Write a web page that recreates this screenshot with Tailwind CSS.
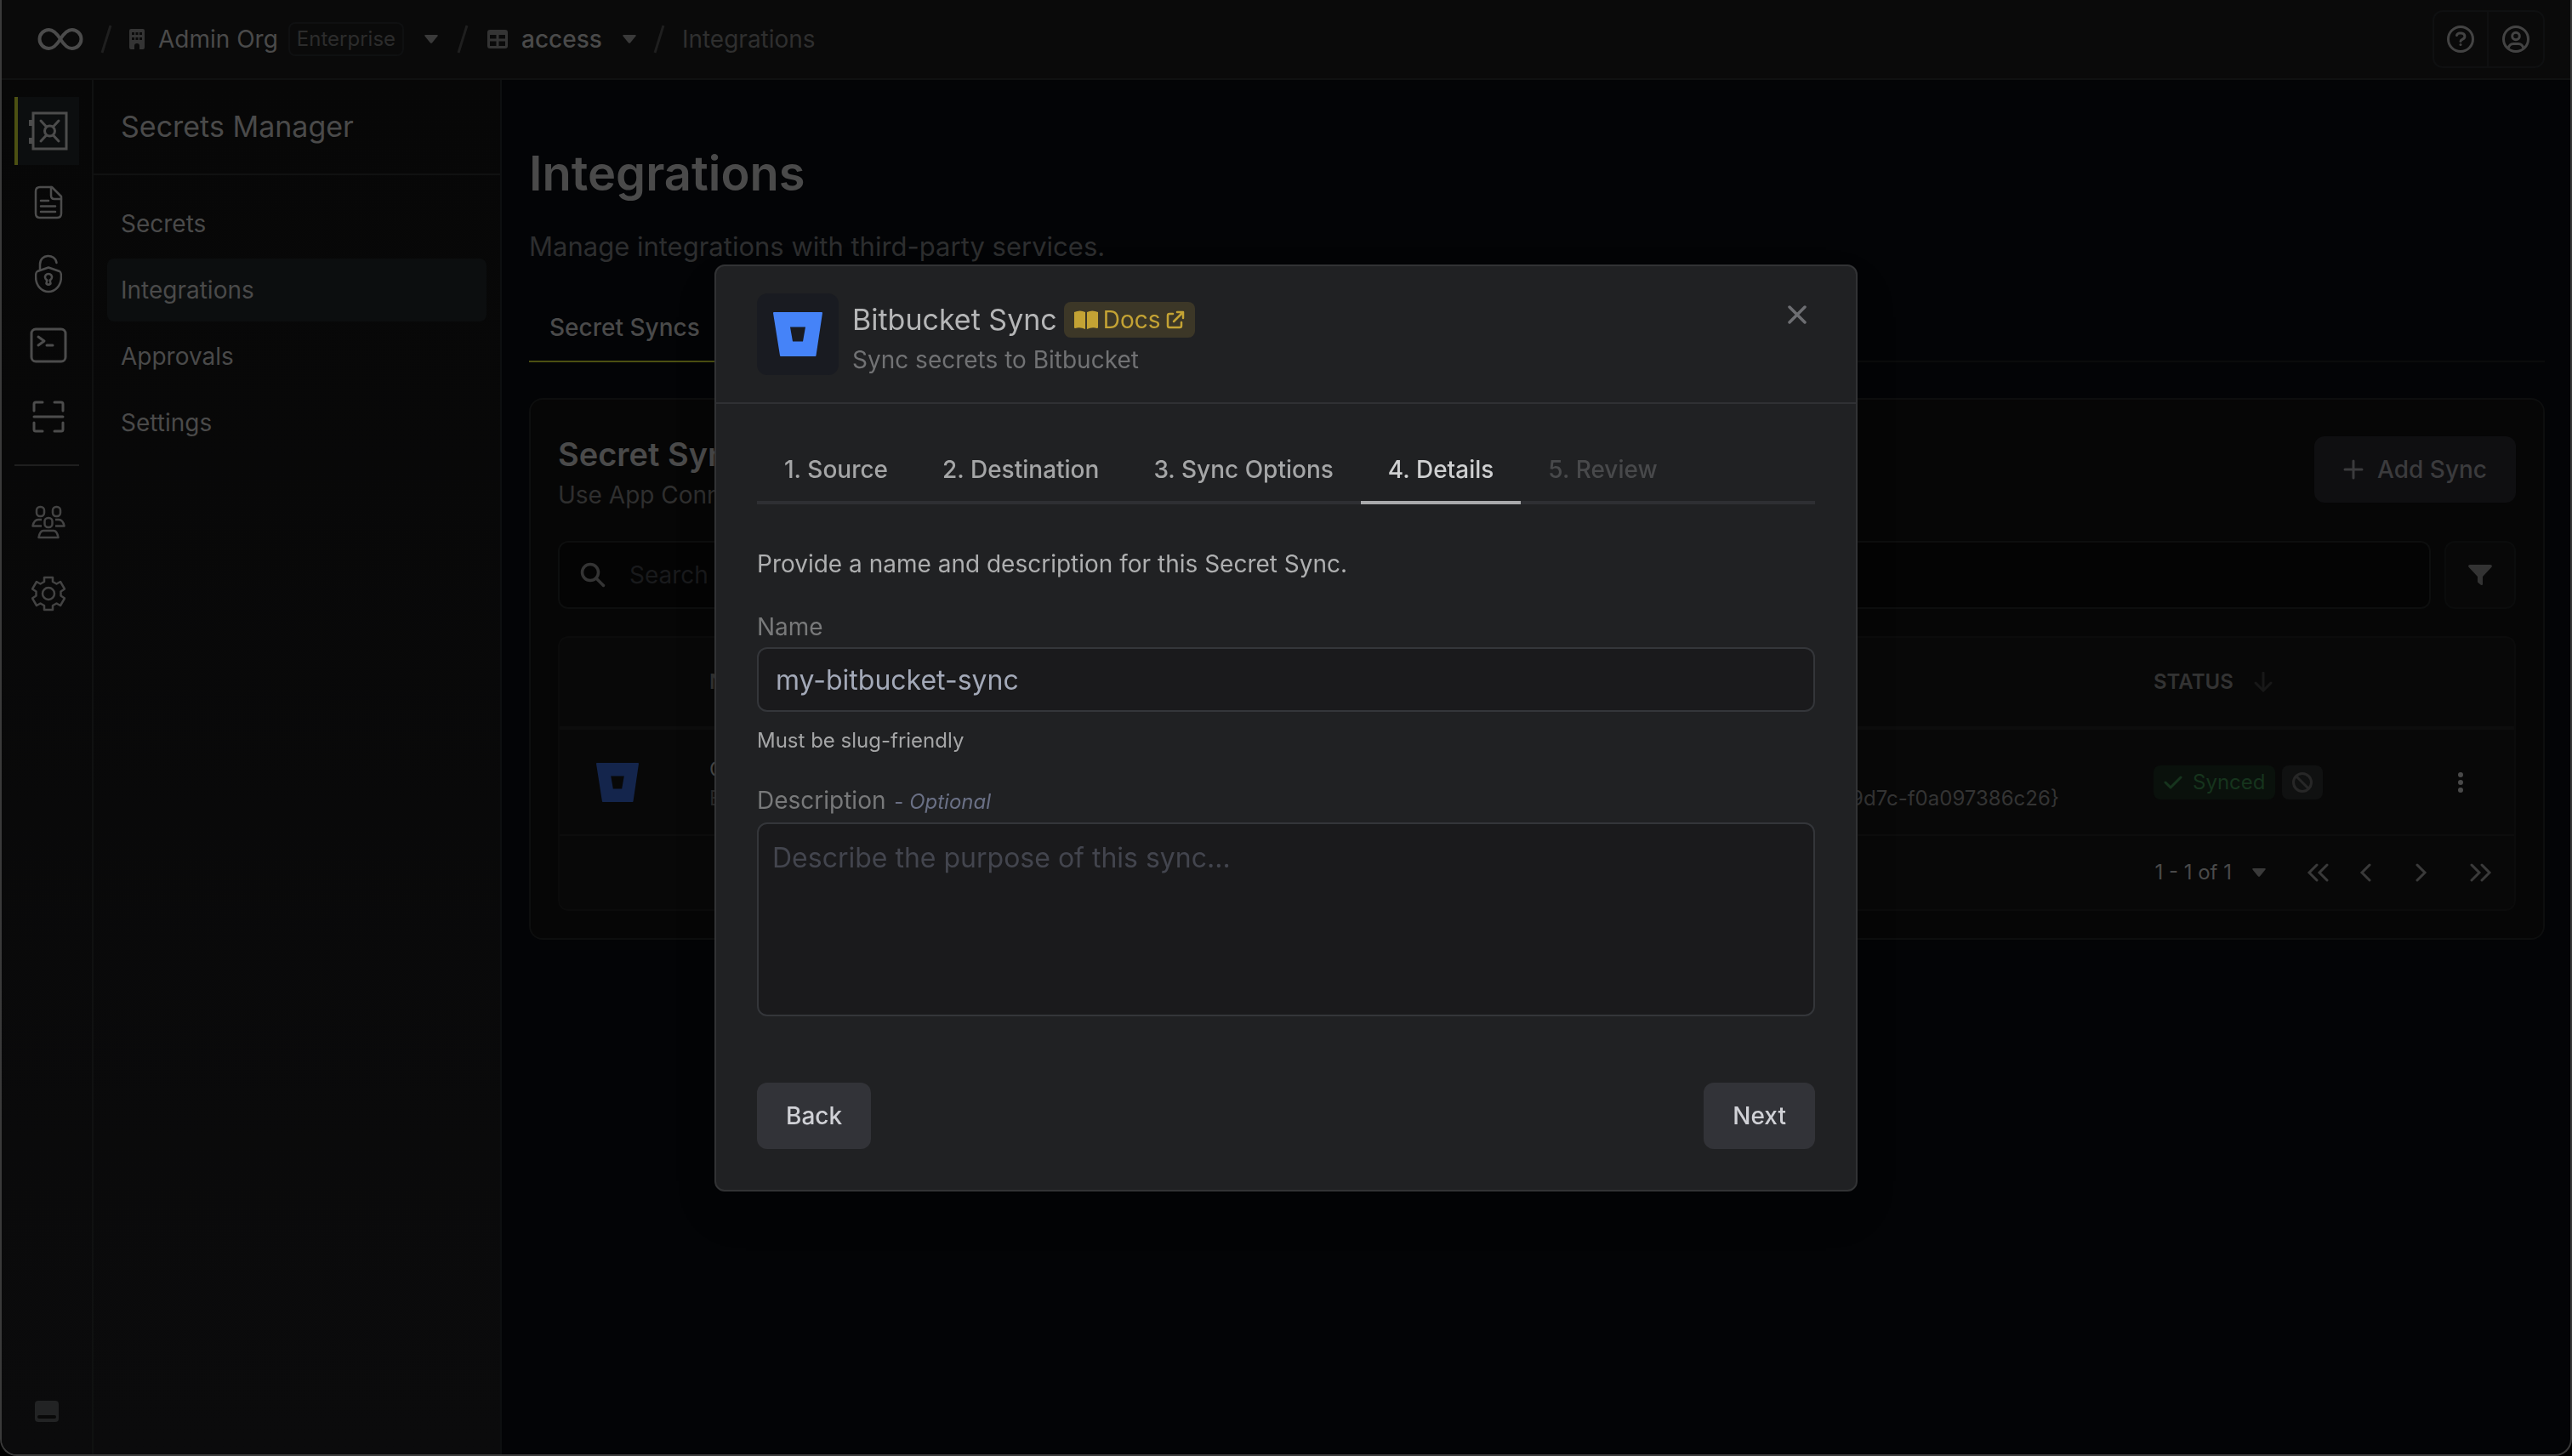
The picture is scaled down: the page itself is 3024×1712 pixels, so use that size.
<!DOCTYPE html>
<html lang="en">

<head>
    <meta charset="UTF-8">
    <meta name="viewport" content="width=device-width, initial-scale=1.0">
    <title>Integrations</title>
    <script src="https://cdn.jsdelivr.net/npm/@tailwindcss/browser@4"></script>
</head>

<body class="bg-black font-['Inter',sans-serif] text-[28px] leading-10 text-[#4a4a4a]">

    <div class="flex h-screen flex-col overflow-hidden rounded-b-[20px] border-x-2 border-b-2 border-[#3a3a3a] bg-[#030406]">

        <!-- top bar -->
        <header class="flex h-[94px] shrink-0 items-center justify-between border-b-2 border-[#101111] bg-[#0a0a0a] pr-[30px] pl-[42px]">
            <div class="flex items-center">
                <a href="#" aria-label="Home">
                    <svg class="h-[26px] w-[54px]" viewBox="0 0 54 26" fill="none" stroke="#4b4b4b" stroke-width="4">
                        <path d="M27 13C22 5 18 2 13.500 2a11 11 0 0 0 0 22C18 24 22 21 27 13S36 2 40.500 2a11 11 0 0 1 0 22C36 24 32 21 27 13Z" />
                    </svg>
                </a>
                <svg class="mx-5 h-[34px] w-[14px]" viewBox="0 0 14 34" stroke="#1f1f1f" stroke-width="3"><path d="M12 1 2 33" /></svg>
                <svg class="h-6 w-[18px]" viewBox="0 0 18 24" fill="#343434" fill-rule="evenodd">
                    <path d="M2 0h14q2 0 2 2v20q0 2-2 2h-4v-4a3 3 0 0 0-6 0v4H2q-2 0-2-2V2q0-2 2-2ZM3 4v3h3V4ZM7.500 4v3h3V4ZM12 4v3h3V4ZM3 10v3h3v-3ZM7.500 10v3h3v-3ZM12 10v3h3v-3Z" />
                </svg>
                <a href="#" class="ml-4">Admin Org</a>
                <button class="ml-3 flex items-center">
                    <span class="flex h-10 items-center rounded-lg border-2 border-[#0f1011] px-2 text-2xl text-[#2c2c2c]">Enterprise</span>
                    <svg class="ml-6 h-[10px] w-4" viewBox="0 0 16 10" fill="#3a3a3a"><path d="M1.500 0h13q2 0 1 1.600L9.200 9.200q-1.200 1-2.400 0L.5 1.600Q-.5 0 1.500 0Z" /></svg>
                </button>
                <svg class="mx-[22px] h-[34px] w-[14px]" viewBox="0 0 14 34" stroke="#1f1f1f" stroke-width="3"><path d="M12 1 2 33" /></svg>
                <svg class="h-[22px] w-6" viewBox="0 0 24 22" fill="#343434" fill-rule="evenodd">
                    <path d="M3 0h18q3 0 3 3v16q0 3-3 3H3q-3 0-3-3V3Q0 0 3 0ZM3 6v4.500h7.500V6ZM13.500 6v4.500H21V6ZM3 13.500V19h7.500v-5.500ZM13.500 13.500V19H21v-5.500Z" />
                </svg>
                <button class="ml-4 flex items-center font-medium">access
                    <svg class="ml-6 h-[10px] w-4" viewBox="0 0 16 10" fill="#3a3a3a"><path d="M1.500 0h13q2 0 1 1.600L9.200 9.200q-1.200 1-2.400 0L.5 1.600Q-.5 0 1.500 0Z" /></svg>
                </button>
                <svg class="mx-5 h-[34px] w-[14px]" viewBox="0 0 14 34" stroke="#1f1f1f" stroke-width="3"><path d="M12 1 2 33" /></svg>
                <span class="text-[#2f2f2f]">Integrations</span>
            </div>
            <div class="flex h-[68px] items-stretch rounded-xl border-2 border-[#0f1011]">
                <button class="w-16 border-r-2 border-[#0f1011]" aria-label="Help">
                    <svg class="mx-auto size-8" viewBox="0 0 32 32" fill="none" stroke="#434343" stroke-width="3" stroke-linecap="round">
                        <circle cx="16" cy="16" r="14.500" /><path d="M11.500 11.500c.6-1.800 2-2.500 3.500-2.500h2c4.500.3 5.200 5.500 1.500 7-1.500.8-2.500 1.300-2.500 2.500" /><path d="M16 22.500v.1" />
                    </svg>
                </button>
                <button class="w-16" aria-label="Account">
                    <svg class="mx-auto size-8" viewBox="0 0 32 32" fill="none" stroke="#434343" stroke-width="3">
                        <circle cx="16" cy="16" r="14.500" /><circle cx="16" cy="12.500" r="4.300" /><path d="M7 27c1-4 3.500-5.500 6-5.500h6c2.500 0 5 1.500 6 5.500" />
                    </svg>
                </button>
            </div>
        </header>

        <div class="flex min-h-0 flex-1">

            <!-- product rail -->
            <nav class="flex w-[108px] shrink-0 flex-col items-center border-r-2 border-[#101111] bg-linear-to-b from-[#070707] to-[#0b0b0c] pt-5">
                <div class="flex flex-col gap-1">
                    <a href="#" aria-label="Secrets Manager" class="flex h-20 w-[76px] items-center border-l-4 border-[#4c5012] bg-[#0c0e0f] pl-3">
                        <svg class="h-[46px] w-[48px]" viewBox="0 0 48 46" fill="none" stroke="#4c4c4c" stroke-width="3">
                            <path d="M6 2h39v42H6Z" /><path d="M3 10v7M3 31v7" stroke-width="4" /><circle cx="25.500" cy="23" r="6" />
                            <path d="m15 11 6.500 7M36 11l-6.500 7M15 35l6.500-7M36 35l-6.500-7" stroke-linecap="round" />
                        </svg>
                    </a>
                    <a href="#" aria-label="Certificates" class="flex h-20 w-[76px] items-center justify-center pl-1">
                        <svg class="h-10 w-[34px]" viewBox="0 0 34 40" fill="none" stroke="#4c4c4c" stroke-width="2.500" stroke-linejoin="round" stroke-linecap="round">
                            <path d="M7 2h14l11 11v20q0 5-5 5H7q-5 0-5-5V7q0-5 5-5Z" /><path d="M20 2v10q0 4 4 4h8M8 18h9M8 24.500h17M8 31h17" />
                        </svg>
                    </a>
                    <a href="#" aria-label="KMS" class="flex h-20 w-[76px] items-center justify-center pl-1">
                        <svg class="h-[46px] w-[32px]" viewBox="0 0 32 46" fill="none" stroke="#4c4c4c" stroke-width="2.500" stroke-linejoin="round" stroke-linecap="round">
                            <path d="M16 15.500 29 20c2 1 2 3 2 6 0 11-7 18-15 18S1 37 1 26c0-3 0-5 2-6Z" /><path d="M6 18v-6C6-1 24-1 25.500 10" />
                            <path d="M14.300 30.500a4 4 0 1 1 3.400 0l.8 4q-2.500 2.500-5 0Z" />
                        </svg>
                    </a>
                    <a href="#" aria-label="SSH" class="flex h-20 w-[76px] items-center justify-center pl-1">
                        <svg class="h-[42px] w-[44px]" viewBox="0 0 44 42" fill="none" stroke="#4c4c4c" stroke-width="3" stroke-linejoin="round" stroke-linecap="round">
                            <rect x="2" y="2" width="40" height="38" rx="5" /><path d="m10 11 7 5-7 5M20 21h7" />
                        </svg>
                    </a>
                    <a href="#" aria-label="Secret Scanning" class="flex h-20 w-[76px] items-center justify-center pl-1">
                        <svg class="h-[38px] w-[38px]" viewBox="0 0 38 38" fill="none" stroke="#4c4c4c" stroke-width="3" stroke-linejoin="round" stroke-linecap="round">
                            <path d="M12 2H4q-2 0-2 2v8M26 2h8q2 0 2 2v8M2 26v8q0 2 2 2h8M36 26v8q0 2-2 2h-8M2 19h34" />
                        </svg>
                    </a>
                </div>
                <hr class="mt-4 w-[76px] border-t-2 border-[#1f1f1f]">
                <div class="mt-[26px] flex flex-col gap-1">
                    <a href="#" aria-label="Access Control" class="flex h-20 w-[76px] items-center justify-center pl-1">
                        <svg class="size-10" viewBox="0 0 40 40" fill="none" stroke="#434343" stroke-width="2.500" stroke-linejoin="round">
                            <rect x="6" y="2" width="9" height="11" rx="4" /><rect x="25" y="2" width="9" height="11" rx="4" /><rect x="15.500" y="15" width="9" height="11" rx="4" />
                            <path d="M12 17H8q-5 0-6.500 7.500H12M28 17h4q5 0 6.500 7.500H28M14 30h12q4 0 5.500 8h-23q1.500-8 5.500-8Z" />
                        </svg>
                    </a>
                    <a href="#" aria-label="Settings" class="flex h-20 w-[76px] items-center justify-center pl-1">
                        <svg class="h-[42px] w-10" viewBox="0 0 40 42" fill="none" stroke="#434343" stroke-width="2.500" stroke-linejoin="round">
                            <path d="M15 2h10v5l4.500 2.500L34 7l5 8.500-4.500 3v5l4.500 3L34 35l-4.500-2.500L25 35v5H15v-5l-4.500-2.500L6 35l-5-8.500 4.500-3v-5l-4.500-3L6 7l4.500 2.500L15 7Z" /><circle cx="20" cy="21" r="7" />
                        </svg>
                    </a>
                </div>
                <button class="mt-auto mb-[38px]" aria-label="Toggle menu">
                    <svg class="h-[25px] w-7" viewBox="0 0 28 25"><rect width="28" height="25" rx="4" fill="#222324" /><rect x="3" y="17" width="22" height="4" rx="2" fill="#090909" /></svg>
                </button>
            </nav>

            <!-- section sidebar -->
            <aside class="flex w-[480px] shrink-0 flex-col border-r-2 border-[#0d0f10] bg-linear-to-b from-[#070707] to-[#0b0b0c]">
                <h2 class="flex h-[112px] items-center border-b-2 border-[#101111] pl-8 text-[34px]">Secrets Manager</h2>
                <nav class="flex flex-col gap-1 px-4 py-5">
                    <a href="#" class="flex h-[74px] items-center rounded-lg px-4">Secrets</a>
                    <a href="#" class="flex h-[74px] items-center rounded-lg bg-[#0c0e0f] px-4">Integrations</a>
                    <a href="#" class="flex h-[74px] items-center rounded-lg px-4">Approvals</a>
                    <a href="#" class="flex h-[74px] items-center rounded-lg px-4">Settings</a>
                </nav>
            </aside>

            <main class="min-w-0 flex-1 pt-[74px] pr-[30px] pl-8">
                <h1 class="text-[56px] leading-[72px] font-semibold">Integrations</h1>
                <p class="mt-[26px] text-[31px] leading-12 text-[#2d2e2f]">Manage integrations with third-party services.</p>

                <div class="mt-8 flex h-20 border-b-2 border-[#0a0b0b]">
                    <button class="-mb-0.5 border-b-2 border-[#4c5012] px-6 font-medium">Secret Syncs</button>
                </div>

                <section class="mt-[42px] rounded-2xl border-2 border-[#0d0e0e] bg-[#060606] p-8">
                    <div class="flex items-center justify-between">
                        <div class="pt-1">
                            <h2 class="text-[38px] leading-14 font-semibold">Secret Syncs</h2>
                            <p class="text-[#2f2f2f]">Use App Connections</p>
                        </div>
                        <button class="flex h-[78px] items-center gap-4 rounded-xl bg-[#0f0f11] px-[34px] font-medium text-[#3b3b3d]">
                            <svg class="size-6" viewBox="0 0 24 24" stroke="#3b3b3d" stroke-width="3" stroke-linecap="round"><path d="M12 2v20M2 12h20" /></svg>
                            Add Sync
                        </button>
                    </div>

                    <div class="mt-[34px] flex gap-4">
                        <label class="flex h-20 flex-1 items-center rounded-xl border-2 border-[#0d0e0e] bg-[#040404] pl-6">
                            <svg class="size-[30px]" viewBox="0 0 30 30" fill="none" stroke="#343434" stroke-width="3.500" stroke-linecap="round"><circle cx="12" cy="12" r="9.500" /><path d="m19 19 8.500 8.500" /></svg>
                            <input type="text" aria-label="Search syncs" placeholder="Search syncs..." class="ml-7 flex-1 bg-transparent outline-none placeholder:text-[#191a1c]">
                        </label>
                        <button class="flex h-20 w-[84px] items-center justify-center rounded-xl border-2 border-[#0b0c0c] bg-[#080808]" aria-label="Filter">
                            <svg class="h-6 w-7" viewBox="0 0 28 24" fill="#333333"><path d="M2 0h24q3 .5 1.300 3L17 14v9q-.5 2-2.500.5l-3-2.500q-.5-.5-.5-1v-6L.7 3Q-1 .5 2 0Z" /></svg>
                        </button>
                    </div>

                    <div class="mt-8 overflow-hidden rounded-xl border-2 border-[#0b0b0b] bg-[#080808]">
                        <table class="w-full table-fixed text-left text-2xl leading-[34px]">
                            <thead>
                                <tr class="h-[106px] border-b-4 border-[#0d0d0d] text-[#333333]">
                                    <th class="w-[144px]"></th>
                                    <th class="px-8 font-semibold">NAME</th>
                                    <th class="px-8 font-semibold">SOURCE</th>
                                    <th class="px-8 font-semibold">DESTINATION</th>
                                    <th class="w-[330px] px-8 font-semibold">
                                        <span class="flex items-center gap-6">STATUS
                                            <svg class="h-6 w-[22px]" viewBox="0 0 22 24" fill="none" stroke="#181818" stroke-width="3" stroke-linecap="round"><path d="M11 1v21M2 13l9 9 9-9" /></svg>
                                        </span>
                                    </th>
                                    <th class="w-[126px]"></th>
                                </tr>
                            </thead>
                            <tbody>
                                <tr class="h-[126px] border-b-2 border-[#0d0d0d]">
                                    <td class="pl-[43px]">
                                        <svg class="h-[46px] w-[50px]" viewBox="0 0 58 52" preserveAspectRatio="none" fill="#14254c" fill-rule="evenodd"><path d="M1 0h56q1 0 1 1l-7.500 50q0 1-1 1H9q-1 0-1-1L0 1q0-1 1-1ZM20 17.500l3 17h12l3-17Z" /></svg>
                                    </td>
                                    <td class="px-8 pt-1"><div>Config</div><div class="text-[#2a2a2a]">Env</div></td>
                                    <td class="px-8 pt-1"><div>dev</div><div class="text-[#2a2a2a]">/</div></td>
                                    <td class="pt-1 pr-[79px]"><div>repo</div><div class="text-right whitespace-nowrap text-[#343434]">9d7c-f0a097386c26}</div></td>
                                    <td class="px-8">
                                        <div class="flex gap-2">
                                            <span class="flex h-10 items-center gap-3 rounded-lg bg-[#0a110c] px-3 text-[#16341d]">
                                                <svg class="h-[18px] w-[22px]" viewBox="0 0 22 18" fill="none" stroke="#16341d" stroke-width="3" stroke-linecap="round" stroke-linejoin="round"><path d="m2 9 6 6L20 3" /></svg>
                                                Synced
                                            </span>
                                            <span class="flex h-10 w-12 items-center justify-center rounded-lg bg-[#101111]">
                                                <svg class="size-6" viewBox="0 0 24 24" fill="none" stroke="#272727" stroke-width="3"><circle cx="12" cy="12" r="10.500" /><path d="m5 5 14 14" /></svg>
                                            </span>
                                        </div>
                                    </td>
                                    <td>
                                        <button class="mx-auto block" aria-label="Options">
                                            <svg class="h-6 w-[6px]" viewBox="0 0 6 24" fill="#4a4a4a"><circle cx="3" cy="3" r="3" /><circle cx="3" cy="12" r="3" /><circle cx="3" cy="21" r="3" /></svg>
                                        </button>
                                    </td>
                                </tr>
                            </tbody>
                        </table>
                        <div class="flex h-[86px] items-center justify-end pr-[26px] text-2xl">
                            <button class="mr-12 flex items-center gap-6">1 - 1 of 1
                                <svg class="h-[10px] w-4" viewBox="0 0 16 10" fill="#3a3a3a"><path d="M1.500 0h13q2 0 1 1.600L9.200 9.200q-1.200 1-2.400 0L.5 1.600Q-.5 0 1.500 0Z" /></svg>
                            </button>
                            <button aria-label="First page"><svg class="h-[22px] w-[26px]" viewBox="0 0 26 22" fill="none" stroke="#3a3a3a" stroke-width="3" stroke-linecap="round"><path d="m12 2-9 9 9 9M24 2l-9 9 9 9" /></svg></button>
                            <button class="ml-9" aria-label="Previous page"><svg class="h-[22px] w-[14px]" viewBox="0 0 14 22" fill="none" stroke="#3a3a3a" stroke-width="3" stroke-linecap="round"><path d="m12 2-9 9 9 9" /></svg></button>
                            <button class="ml-[52px]" aria-label="Next page"><svg class="h-[22px] w-[14px]" viewBox="0 0 14 22" fill="none" stroke="#3a3a3a" stroke-width="3" stroke-linecap="round"><path d="m2 2 9 9-9 9" /></svg></button>
                            <button class="ml-[50px]" aria-label="Last page"><svg class="h-[22px] w-[26px]" viewBox="0 0 26 22" fill="none" stroke="#3a3a3a" stroke-width="3" stroke-linecap="round"><path d="m2 2 9 9-9 9M14 2l9 9-9 9" /></svg></button>
                        </div>
                    </div>
                </section>
            </main>
        </div>
    </div>

    <!-- create sync dialog -->
    <div class="fixed inset-0 flex items-center justify-center">
        <div role="dialog" aria-labelledby="dialog-title" class="w-[1344px] max-w-full rounded-xl border-2 border-[#323335] bg-[#202123] shadow-2xl">
            <div class="flex items-start border-b-2 border-[#303134] px-12 pt-8 pb-[30px]">
                <div class="flex size-24 items-center justify-center rounded-xl bg-[#191b21]">
                    <svg class="h-[52px] w-[58px]" viewBox="0 0 58 52" fill="#4583f8" fill-rule="evenodd"><path d="M1 0h56q1 0 1 1l-7.500 50q0 1-1 1H9q-1 0-1-1L0 1q0-1 1-1ZM20 17.500l3 17h12l3-17Z" /></svg>
                </div>
                <div class="ml-4 pt-2">
                    <div class="flex items-center gap-2">
                        <h2 id="dialog-title" class="text-[34px] leading-[46px] text-[#b5b6b7]">Bitbucket Sync</h2>
                        <a href="#" class="flex h-[42px] items-center gap-1.5 rounded-lg bg-[#3c3727] px-3 text-[#c4a334]">
                            <svg class="h-[22px] w-[28px]" viewBox="0 0 28 22" fill="#c4a334"><path d="M13 2v20Q7 19 1 21q-1 0-1-1V2Q7-1 13 2ZM15 2v20q6-3 12-1 1 0 1-1V2q-7-3-13 0Z" /></svg>
                            Docs
                            <svg class="size-[22px]" viewBox="0 0 22 22" fill="none" stroke="#c4a334" stroke-width="2.500" stroke-linecap="round" stroke-linejoin="round"><path d="M8 4H4Q2 4 2 6v12q0 2 2 2h12q2 0 2-2v-4M13 2h7v7M20 2 9 13" /></svg>
                        </a>
                    </div>
                    <p class="mt-1 text-[#717274]">Sync secrets to Bitbucket</p>
                </div>
                <button class="mt-[14px] mr-[10px] ml-auto" aria-label="Close">
                    <svg class="size-[22px]" viewBox="0 0 22 22" stroke="#6d6e72" stroke-width="3.500" stroke-linecap="round"><path d="m2 2 18 18M20 2 2 20" /></svg>
                </button>
            </div>

            <form class="px-12 pt-10 pb-12">
                <div class="flex h-[78px] border-b-4 border-[#2e2f33] font-medium text-[#a5a6a7]">
                    <button type="button" class="-mb-1 border-b-4 border-transparent px-8">1. Source</button>
                    <button type="button" class="-mb-1 border-b-4 border-transparent px-8">2. Destination</button>
                    <button type="button" class="-mb-1 border-b-4 border-transparent px-8">3. Sync Options</button>
                    <button type="button" class="-mb-1 border-b-4 border-[#a9aaac] px-8 text-[#cfd0d1]">4. Details</button>
                    <button type="button" class="-mb-1 border-b-4 border-transparent px-8 text-[#48494b]" disabled>5. Review</button>
                </div>

                <p class="mt-[50px] text-[#aeafb0]">Provide a name and description for this Secret Sync.</p>

                <label for="name" class="mt-[34px] block text-[#78797a]">Name</label>
                <input id="name" type="text" value="my-bitbucket-sync" class="mt-1 block h-[76px] w-full rounded-xl border-2 border-[#34363a] bg-[#1a1a1c] px-5 text-[32px] text-[#a3a9b8] outline-none">
                <p class="mt-[18px] text-2xl leading-8 text-[#a5a6a7]">Must be slug-friendly</p>

                <label for="description" class="mt-[34px] block text-[#78797a]">Description <span class="ml-0.5 text-2xl text-[#6a7085]">- <i>Optional</i></span></label>
                <textarea id="description" placeholder="Describe the purpose of this sync..." class="mt-1.5 block h-[228px] w-full resize-none rounded-xl border-2 border-[#34363a] bg-[#1a1a1c] px-4 py-5 text-[32px] leading-10 outline-none placeholder:text-[#43454e]"></textarea>

                <div class="mt-[78px] flex justify-between font-medium text-[#d0d1d6]">
                    <button type="button" class="h-[78px] rounded-xl bg-[#323338] px-[34px]">Back</button>
                    <button type="button" class="h-[78px] rounded-xl bg-[#323338] px-[34px]">Next</button>
                </div>
            </form>
        </div>
    </div>
</body>

</html>
